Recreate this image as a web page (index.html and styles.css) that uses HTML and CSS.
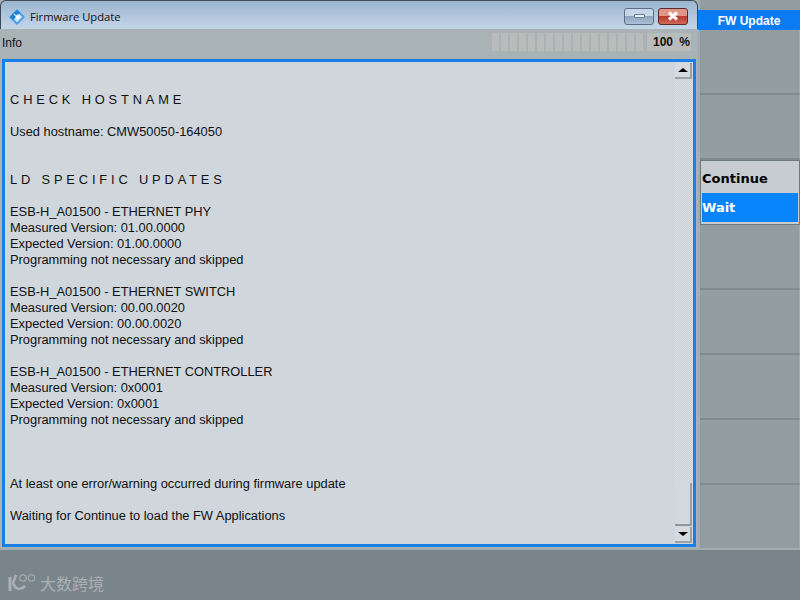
FILE: index.html
```html
<!DOCTYPE html>
<html lang="en">
<head>
<meta charset="utf-8">
<title>Firmware Update</title>
<link rel="stylesheet" href="styles.css">
</head>
<body>
<div class="screen">
  <div class="main">
    <section class="window">
      <header class="titlebar">
        <svg class="app-icon" width="16" height="16" viewBox="0 0 16 16">
          <path d="M8 0 16 8 8 16 0 8Z" fill="#3f9be8"/>
          <path d="M8 2.500 13.500 8 8 13.500 2.500 8Z" fill="#bfe3fa"/>
          <path d="M8 1 11 4 8 7 5 4Z M4 5 7 8 4 11 1 8Z" fill="#1d7fd6"/>
          <path d="M8.500 5 11 8 8.500 11 6.500 8Z" fill="#fff"/>
        </svg>
        <span class="title">Firmware Update</span>
        <div class="win-buttons">
          <div class="win-btn min"><span class="min-glyph"></span></div>
          <div class="win-btn close">
            <svg width="14" height="10" viewBox="0 0 14 10"><path d="M3 1.500 11 8.500M11 1.500 3 8.500" fill="none" stroke="#fff" stroke-width="3"/></svg>
          </div>
        </div>
      </header>
      <div class="inforow">
        <span class="info">Info</span>
        <div class="progress">
          <div class="segments">
            <i></i><i></i><i></i><i></i><i></i><i></i><i></i><i></i><i></i><i></i><i></i><i></i><i></i><i></i><i></i><i></i><i></i>
          </div>
          <b class="pct">100</b>
          <b class="pct-sign">%</b>
        </div>
      </div>
      <div class="logbox">
        <div class="log">
          <p class="h first">CHECK HOSTNAME</p>
          <p class="gap1">Used hostname: CMW50050-164050</p>
          <p class="h gap2">LD SPECIFIC UPDATES</p>
          <p class="gap1">ESB-H_A01500 - ETHERNET PHY</p>
          <p>Measured Version: 01.00.0000</p>
          <p>Expected Version: 01.00.0000</p>
          <p>Programming not necessary and skipped</p>
          <p class="gap1">ESB-H_A01500 - ETHERNET SWITCH</p>
          <p>Measured Version: 00.00.0020</p>
          <p>Expected Version: 00.00.0020</p>
          <p>Programming not necessary and skipped</p>
          <p class="gap1">ESB-H_A01500 - ETHERNET CONTROLLER</p>
          <p>Measured Version: 0x0001</p>
          <p>Expected Version: 0x0001</p>
          <p>Programming not necessary and skipped</p>
          <p class="gap3">At least one error/warning occurred during firmware update</p>
          <p class="gap1">Waiting for Continue to load the FW Applications</p>
        </div>
        <div class="scrollbar">
          <div class="sb-btn"><span class="arrow-up"></span></div>
          <div class="track"></div>
          <div class="thumb"></div>
          <div class="sb-btn"><span class="arrow-down"></span></div>
        </div>
      </div>
    </section>
    <aside class="softkeys">
      <div class="tab">FW Update</div>
      <div class="key k1"></div>
      <div class="key k2"></div>
      <div class="menu">
        <div class="menu-item">Continue</div>
        <div class="menu-item active">Wait</div>
      </div>
      <div class="key"></div>
      <div class="key"></div>
      <div class="key"></div>
      <div class="key"></div>
      <div class="key last"></div>
    </aside>
  </div>
  <footer class="bottom">
    <svg class="logo" width="28" height="20" viewBox="0 0 28 20">
      <path d="M2 4V18" fill="none" stroke="#a9b1b4" stroke-width="3"/>
      <path d="M8 2 5 10C7 16 12 18 17 13" fill="none" stroke="#a9b1b4" stroke-width="2.500"/>
      <circle cx="15" cy="5" r="3.200" fill="none" stroke="#a9b1b4" stroke-width="1.100"/>
      <circle cx="23.500" cy="5" r="3.200" fill="none" stroke="#a9b1b4" stroke-width="1.100"/>
    </svg>
    <span class="brand">大数跨境</span>
  </footer>
</div>
</body>
</html>
```
FILE: styles.css
```css
* { box-sizing: border-box; }
html, body { margin: 0; padding: 0; }
body { width: 800px; height: 600px; overflow: hidden; font-family: "Liberation Sans", Arial, sans-serif; font-size: 12.850px; color: #111; }
.screen { width: 800px; height: 600px; display: flex; flex-direction: column; background: #7a858b; }
.main { height: 550px; display: flex; background: #929da1; border-bottom: 2px solid #a2acae; }

.window { width: 698px; display: flex; flex-direction: column; background: #a9b3b6; }
.titlebar { height: 29px; flex: none; display: flex; align-items: center; padding: 3px 9px 0 8px; background: linear-gradient(#9db5d0, #c3d5e8); border: 1px solid #3d4a55; border-bottom: 0; border-radius: 6px 6px 0 0; }
.app-icon { flex: none; }
.title { margin-left: 5px; font-family: "Open Sans", sans-serif; font-size: 11.200px; color: #111; }
.win-buttons { margin-left: auto; display: flex; gap: 4px; margin-top: -1px; }
.win-btn { width: 30px; height: 17px; display: flex; align-items: center; justify-content: center; border-radius: 3px; }
.min { background: linear-gradient(#c7d6e6 0 45%, #8ea6c0 50%, #a9c0d6); border: 1px solid #5c6f85; }
.min-glyph { width: 11px; height: 4px; background: #e8eef3; border: 1px solid #6d7f92; border-radius: 1px; }
.close { background: linear-gradient(#e0958a 0 45%, #b73a2e 50%, #cf6a58); border: 1px solid #5e2a2a; }

.inforow { height: 30px; flex: none; display: flex; align-items: flex-start; justify-content: space-between; padding: 4px 7px 0 2px; }
.info { font-size: 12px; line-height: 20px; }
.progress { width: 199px; height: 18px; display: flex; background: #bbbfbf; font-size: 12px; }
.segments { width: 155px; display: flex; gap: 2px; background: #a9b3b6; }
.segments i { width: 7px; background: #b8bcbb; }
.pct { width: 31px; padding-right: 5px; text-align: right; line-height: 19px; background: #b8bcbb; }
.pct-sign { flex: 1; text-align: right; padding-right: 1px; line-height: 19px; background: #b8bcbb; }

.logbox { width: 694px; height: 488px; margin-left: 2px; display: flex; border: 3px solid #1a7ee6; background: #cfd6dc; }
.log { flex: 1; padding: 30px 0 0 5px; }
.log p { margin: 0; line-height: 16px; white-space: pre; }
.log .h { letter-spacing: 3.850px; }
.log .first { margin-top: 0; }
.log .gap1 { margin-top: 16px; }
.log .gap2 { margin-top: 32px; }
.log .gap3 { margin-top: 48px; }

.scrollbar { width: 17px; margin: 1px 1px 1px 0; display: flex; flex-direction: column; }
.sb-btn { height: 16px; flex: none; display: flex; align-items: center; justify-content: center; background: #d6dbdf; border-right: 2px solid #9aa2a5; border-bottom: 2px solid #9aa2a5; }
.track { flex: 1; background: repeating-conic-gradient(#cbd2d6 0 25%, #d9dee2 0 50%) 0 0 / 2px 2px; }
.thumb { height: 43px; flex: none; margin-bottom: 1px; background: #d2d8dd; border-right: 2px solid #9aa2a5; border-bottom: 2px solid #8f979a; }
.arrow-up { border: 5px solid transparent; border-top: 0; border-bottom: 4px solid #000; }
.arrow-down { border: 5px solid transparent; border-bottom: 0; border-top: 4px solid #000; }

.softkeys { flex: 1; display: flex; flex-direction: column; padding-top: 10px; border-left: 2px solid #a2acae; }
.tab { height: 20px; flex: none; margin-left: -2px; text-align: center; font-size: 12px; line-height: 22px; font-weight: bold; color: #fff; background: #0a7cf2; }
.key { height: 65px; flex: none; border-bottom: 2px solid #7f8b8f; border-right: 1px solid #a2acae; }
.last { height: 64px; border-bottom: 0; }
.menu { height: 65px; flex: none; display: flex; flex-direction: column; padding: 3px 1px 2px 1px; background: #c7ccd0; border: 1px solid #6f7a7e; font-family: "DejaVu Sans", Verdana, sans-serif; font-size: 13px; font-weight: bold; color: #000; }
.menu-item { height: 29px; flex: none; line-height: 29px; }
.active { background: #0a84fb; color: #fff; }

.bottom { flex: 1; display: flex; align-items: center; padding: 16px 0 0 8px; }
.logo { flex: none; }
.brand { margin-left: 4px; font-family: "Noto Sans CJK SC", sans-serif; font-size: 16px; line-height: 20px; color: #a9b1b4; }
```
